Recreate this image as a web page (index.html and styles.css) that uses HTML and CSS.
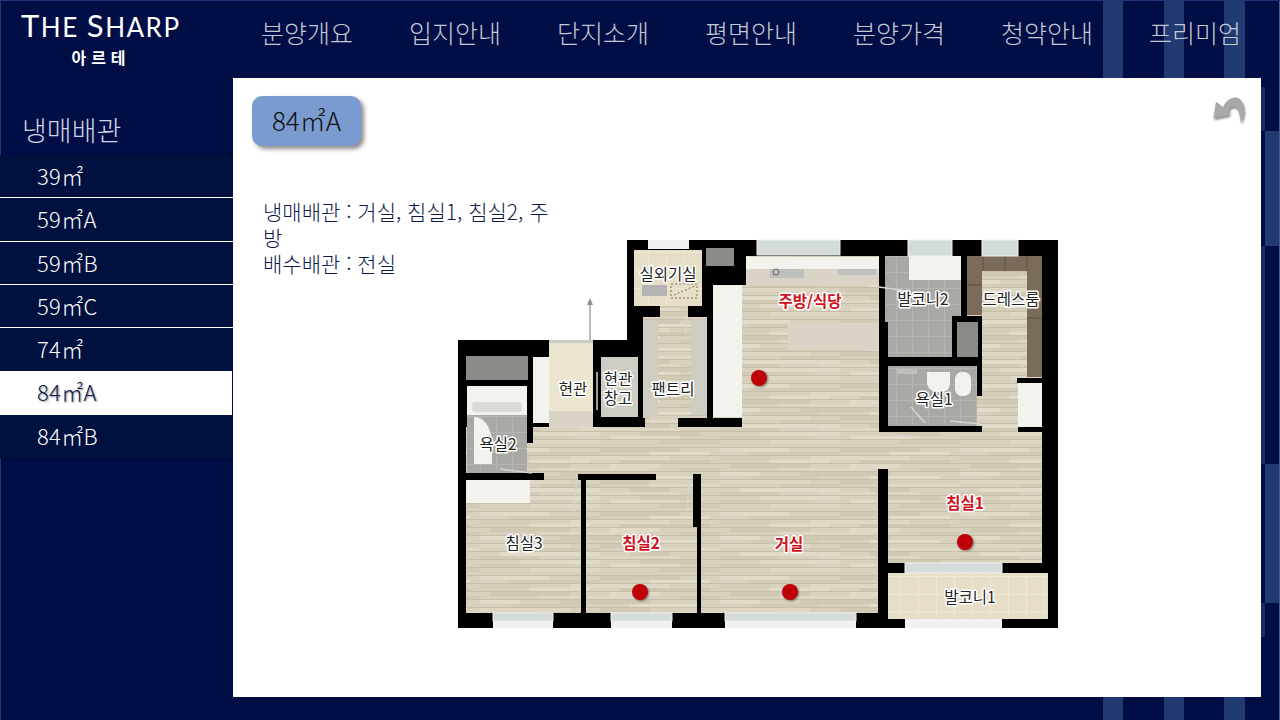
FILE: index.html
```html
<!DOCTYPE html>
<html lang="ko">
<head>
    <meta charset="UTF-8">
    <title>THE SHARP 아르테</title>
    <link rel="stylesheet" href="styles.css">
</head>
<body>
<div class="page">
    <header class="top">
        <div class="logo">
            <div class="logo-name"><span class="cap">T</span>HE <span class="cap">S</span>HARP</div>
            <div class="logo-sub">아르테</div>
        </div>
        <nav class="nav">
            <a>분양개요</a>
            <a>입지안내</a>
            <a>단지소개</a>
            <a>평면안내</a>
            <a>분양가격</a>
            <a>청약안내</a>
            <a>프리미엄</a>
        </nav>
    </header>
    <div class="main">
        <aside class="side">
            <h2>냉매배관</h2>
            <ul class="menu">
                <li>39㎡</li>
                <li>59㎡A</li>
                <li>59㎡B</li>
                <li>59㎡C</li>
                <li>74㎡</li>
                <li class="active">84㎡A</li>
                <li>84㎡B</li>
            </ul>
        </aside>
        <section class="panel">
            <div class="badge">84㎡A</div>
            <!-- back arrow -->
            <svg class="back" viewBox="0 0 38 34" width="38" height="34">
                <path d="M3.3 24.3 L6 7.7 L13 13.2 C16 5.5 24 1 29.5 5 C35 9 36 20 30.7 28.7 C30.5 21 28 13 24 12.6 C21 12.4 19 14.5 19 16 L19.5 21 Z"/>
            </svg>
            <div class="content">
                <p class="note">냉매배관 : 거실, 침실1, 침실2, 주방<br>배수배관 : 전실</p>
                <svg class="plan" viewBox="457 238 602 392" width="602" height="392">
                    <defs>
                        <pattern id="planks" width="240" height="64" patternUnits="userSpaceOnUse">
                            <rect width="240" height="64" fill="#d8d1bd"/>
                            <rect x="0" y="0" width="70" height="4" fill="#e0dac8"/>
                            <rect x="120" y="0" width="80" height="4" fill="#d0c9b4"/>
                            <rect x="30" y="4" width="90" height="4" fill="#d1cab5"/>
                            <rect x="170" y="4" width="60" height="4" fill="#e2dccb"/>
                            <rect x="0" y="8" width="50" height="4" fill="#d3ccb7"/>
                            <rect x="90" y="8" width="100" height="4" fill="#ded8c5"/>
                            <rect x="50" y="12" width="60" height="4" fill="#e1dbc9"/>
                            <rect x="140" y="12" width="90" height="4" fill="#cfc8b3"/>
                            <rect x="10" y="16" width="80" height="4" fill="#d0c9b4"/>
                            <rect x="130" y="16" width="50" height="4" fill="#e0dac7"/>
                            <rect x="60" y="20" width="110" height="4" fill="#ddd7c4"/>
                            <rect x="200" y="20" width="40" height="4" fill="#d1cab5"/>
                            <rect x="0" y="24" width="40" height="4" fill="#e1dbc9"/>
                            <rect x="80" y="24" width="90" height="4" fill="#d0c9b4"/>
                            <rect x="30" y="28" width="70" height="4" fill="#d2cbb6"/>
                            <rect x="150" y="28" width="70" height="4" fill="#e2dcca"/>
                            <rect x="0" y="32" width="90" height="4" fill="#ddd7c4"/>
                            <rect x="120" y="32" width="50" height="4" fill="#d0c9b4"/>
                            <rect x="60" y="36" width="60" height="4" fill="#d1cab5"/>
                            <rect x="170" y="36" width="70" height="4" fill="#dfd9c6"/>
                            <rect x="20" y="40" width="100" height="4" fill="#e1dbc9"/>
                            <rect x="150" y="40" width="40" height="4" fill="#d0c9b4"/>
                            <rect x="0" y="44" width="60" height="4" fill="#d1cab5"/>
                            <rect x="100" y="44" width="100" height="4" fill="#ddd7c4"/>
                            <rect x="40" y="48" width="80" height="4" fill="#e0dac8"/>
                            <rect x="160" y="48" width="60" height="4" fill="#d0c9b4"/>
                            <rect x="0" y="52" width="90" height="4" fill="#d2cbb6"/>
                            <rect x="130" y="52" width="70" height="4" fill="#e1dbc9"/>
                            <rect x="50" y="56" width="70" height="4" fill="#ddd7c4"/>
                            <rect x="180" y="56" width="60" height="4" fill="#d1cab5"/>
                            <path d="M0 7.5H240M0 15.5H240M0 23.5H240M0 31.5H240M0 39.5H240M0 47.5H240M0 55.5H240M0 63.5H240" stroke="#c6bfaa" stroke-width="1"/>
                        </pattern>
                        <pattern id="tiles" width="16" height="16" patternUnits="userSpaceOnUse">
                            <rect width="16" height="16" fill="#a9a8a4"/>
                            <path d="M0 .5H16M.5 0V16" stroke="#b6b5b1" stroke-width="1"/>
                        </pattern>
                        <pattern id="creamtiles" width="18" height="18" patternUnits="userSpaceOnUse">
                            <rect width="18" height="18" fill="#e7dec7"/>
                            <path d="M0 .5H18M.5 0V18" stroke="#efe8d6" stroke-width="1"/>
                        </pattern>
                    </defs>

                    <!-- outer walls -->
                    <polygon class="wall" points="627,240 1058,240 1058,628 458,628 458,340 627,340"/>

                    <!-- wood floors -->
                    <rect class="wood" x="466" y="427" width="576" height="186"/>
                    <rect class="wood" x="713" y="256" width="166" height="174"/>
                    <rect class="wood" x="967" y="256" width="75" height="174"/>
                    <rect class="wood" x="643" y="317" width="64" height="111"/>

                    <!-- kitchen -->
                    <rect class="wall" x="713" y="240" width="33" height="45"/>
                    <rect class="white" x="713" y="285" width="29" height="132"/>
                    <rect class="wall" x="678" y="418" width="64" height="9"/>
                    <rect class="counter" x="746" y="269" width="133" height="16"/>
                    <rect class="white" x="746" y="257" width="133" height="12"/>
                    <rect class="steel" x="770" y="269" width="34" height="9"/>
                    <circle class="hob" cx="776" cy="272" r="3"/>
                    <rect class="steel" x="838" y="269" width="38" height="6"/>
                    <rect class="counter" x="788" y="323" width="91" height="27"/>

                    <!-- balcony 2, dressing room -->
                    <rect class="wall" x="879" y="256" width="6" height="32"/>
                    <rect class="tile" x="885" y="256" width="76" height="101"/>
                    <rect class="white" x="909" y="256" width="52" height="24"/>
                    <rect class="wall" x="961" y="256" width="6" height="60"/>
                    <rect class="brown" x="967" y="256" width="75" height="15"/>
                    <rect class="brown" x="967" y="256" width="15" height="59"/>
                    <rect class="brown" x="1027" y="256" width="15" height="121"/>
                    <path class="seam" d="M983 256V271M1005 256V271M1027 256V271M967 285H982M1027 318H1042"/>
                    <rect class="wall" x="952" y="316" width="30" height="46"/>
                    <rect class="duct" x="957" y="322" width="21" height="38"/>

                    <!-- bath 1 -->
                    <rect class="wall" x="879" y="322" width="9" height="110"/>
                    <rect class="wall" x="879" y="357" width="103" height="9"/>
                    <rect class="wall" x="977" y="362" width="5" height="34"/>
                    <rect class="wall" x="879" y="426" width="103" height="6"/>
                    <rect class="tile" x="888" y="366" width="89" height="60"/>
                    <path class="white" d="M927 372H950V382C950 392 944 392 938 392C932 392 927 388 927 382Z"/>
                    <rect class="white" x="955" y="372" width="16" height="24" rx="7"/>
                    <rect class="steel" x="897" y="369" width="20" height="5"/>

                    <!-- closet next to dressing room -->
                    <rect class="wall" x="1017" y="378" width="26" height="5"/>
                    <rect class="white" x="1018" y="383" width="24" height="44"/>
                    <rect class="wall" x="1018" y="427" width="25" height="5"/>

                    <!-- bedroom 1, balcony 1 -->
                    <rect class="wall" x="878" y="469" width="10" height="159"/>
                    <rect class="wall" x="878" y="563" width="180" height="10"/>
                    <rect class="cream" x="888" y="573" width="160" height="46"/>
                    <rect class="pane" x="905" y="563" width="97" height="10"/>
                    <rect class="pane-white" x="905" y="619" width="97" height="9"/>

                    <!-- laundry, pantry -->
                    <rect class="cream" x="634" y="250" width="68" height="56"/>
                    <rect class="grey" x="642" y="285" width="25" height="11"/>
                    <rect class="dash" x="671" y="284" width="26" height="14"/>
                    <path class="dash" d="M674 295L695 286"/>
                    <rect class="wood" x="660" y="306" width="28" height="12"/>
                    <rect class="duct" x="706" y="248" width="28" height="18"/>
                    <rect class="cabinet" x="643" y="320" width="15" height="96"/>
                    <rect class="cabinet" x="691" y="319" width="16" height="96"/>
                    <rect class="wall" x="597" y="418" width="48" height="9"/>

                    <!-- entrance, storage -->
                    <rect class="cream-plain" x="549" y="343" width="44" height="68"/>
                    <rect class="counter" x="549" y="411" width="44" height="16"/>
                    <rect class="white" x="533" y="357" width="16" height="66"/>
                    <rect class="cabinet" x="601" y="357" width="37" height="60"/>
                    <rect class="sill" x="549" y="340" width="44" height="3"/>
                    <path class="door" d="M597 372V410"/>
                    <path class="arrow-line" d="M590 340V302"/>
                    <polygon class="arrow-head" points="590,298 587,305 593,305"/>

                    <!-- bath 2 -->
                    <rect class="duct" x="466" y="356" width="62" height="24"/>
                    <rect class="wall" x="527" y="380" width="6" height="63"/>
                    <rect class="tile" x="467" y="386" width="60" height="87"/>
                    <rect class="white" x="467" y="386" width="60" height="29"/>
                    <rect class="tub" x="472" y="402" width="50" height="10" rx="3"/>
                    <path class="white" d="M474 417C486 417 492 430 492 446V464H474Z"/>
                    <rect class="wall" x="458" y="473" width="86" height="7"/>
                    <rect class="white" x="466" y="480" width="64" height="23"/>

                    <!-- bedroom walls -->
                    <rect class="wall" x="578" y="474" width="78" height="6"/>
                    <rect class="wall" x="581" y="474" width="5" height="139"/>
                    <rect class="wall" x="693" y="474" width="8" height="53"/>
                    <rect class="wall" x="697" y="527" width="4" height="86"/>
                    <rect class="wall" x="856" y="613" width="22" height="15"/>

                    <!-- windows -->
                    <rect class="pane-white" x="648" y="240" width="41" height="9"/>
                    <g class="window">
                        <rect class="pane" x="757" y="240" width="83" height="15"/>
                        <rect class="pane" x="908" y="240" width="44" height="16"/>
                        <rect class="pane" x="982" y="240" width="36" height="16"/>
                        <rect class="pane" x="493" y="613" width="60" height="8"/>
                        <rect class="pane" x="611" y="613" width="61" height="8"/>
                        <rect class="pane" x="725" y="613" width="131" height="8"/>
                        <rect class="pane-white" x="493" y="621" width="60" height="7"/>
                        <rect class="pane-white" x="611" y="621" width="61" height="7"/>
                        <rect class="pane-white" x="725" y="621" width="131" height="7"/>
                    </g>

                    <!-- door leaves -->
                    <path class="door" d="M879 287L907 291M911 407L925 423M950 421L980 424M880 433L920 438M577 480L574 512M689 480L687 512M500 469L532 473M687 317L685 342"/>

                    <!-- refrigerant pipe points -->
                    <circle class="dot" cx="759" cy="378" r="8"/>
                    <circle class="dot" cx="965" cy="542" r="8"/>
                    <circle class="dot" cx="640" cy="592" r="8"/>
                    <circle class="dot" cx="790" cy="592" r="8"/>

                    <!-- room labels -->
                    <text class="lbl" x="668" y="280">실외기실</text>
                    <text class="lbl red" x="810" y="307">주방/식당</text>
                    <text class="lbl" x="923" y="305">발코니2</text>
                    <text class="lbl" x="1011" y="305">드레스룸</text>
                    <text class="lbl" x="573" y="395">현관</text>
                    <text class="lbl" x="618" y="385">현관</text>
                    <text class="lbl" x="618" y="404">창고</text>
                    <text class="lbl" x="673" y="395">팬트리</text>
                    <text class="lbl" x="934" y="405">욕실1</text>
                    <text class="lbl" x="498" y="450">욕실2</text>
                    <text class="lbl" x="524" y="549">침실3</text>
                    <text class="lbl red" x="641" y="549">침실2</text>
                    <text class="lbl red" x="789" y="550">거실</text>
                    <text class="lbl red" x="965" y="509">침실1</text>
                    <text class="lbl" x="970" y="603">발코니1</text>
                </svg>
            </div>
        </section>
    </div>
</div>
</body>
</html>
```

FILE: styles.css
```css
body {
    margin: 0;
    background: #010e46;
    font-family: "Noto Sans CJK KR", "Noto Sans", sans-serif;
    overflow: hidden;
}
.page {
    position: relative;
    width: 1280px;
    height: 720px;
    overflow: hidden;
    box-shadow: inset 1px 1px 0 #25347a, inset -1px 0 0 #4b5a9c;
    background-color: #010e46;
    background-image:
        linear-gradient(#223a72, #223a72),
        linear-gradient(#223a72, #223a72),
        linear-gradient(#223a72, #223a72),
        linear-gradient(#223a72, #223a72),
        linear-gradient(#223a72, #223a72),
        linear-gradient(#1c2c5e, #1c2c5e),
        linear-gradient(#1c2c5e, #1c2c5e),
        linear-gradient(#1c2c5e, #1c2c5e);
    background-repeat: no-repeat;
    background-size:
        20px 720px, 20px 720px, 21px 720px,
        14px 115px, 14px 139px,
        4px 44px, 4px 218px, 4px 34px;
    background-position:
        1103px 0, 1164px 0, 1224px 0,
        1265px 131px, 1265px 464px,
        1261px 87px, 1261px 246px, 1261px 603px;
}
.top {
    display: flex;
    height: 78px;
}
.logo {
    width: 233px;
    flex: none;
    padding: 9px 0 0 21px;
    box-sizing: border-box;
    color: #fff;
}
.logo-name {
    font-family: "Lato", sans-serif;
    font-size: 26px;
    line-height: 32px;
    letter-spacing: 1.5px;
    white-space: nowrap;
}
.cap {
    font-size: 31px;
}
.logo-sub {
    width: 160px;
    text-align: center;
    font-size: 16px;
    font-weight: 700;
    line-height: 20px;
    letter-spacing: 5px;
    margin-top: 4px;
}
.nav {
    display: flex;
    gap: 56px;
    margin-left: 28px;
    padding-top: 13px;
}
.nav a {
    width: 92px;
    color: #c4c8d4;
    font-size: 25px;
    font-weight: 300;
    line-height: 38px;
    white-space: nowrap;
}
.main {
    display: flex;
}
.side {
    width: 233px;
    flex: none;
}
.side h2 {
    margin: 0;
    height: 77px;
    padding: 32px 0 0 22px;
    box-sizing: border-box;
    color: #cfd5e4;
    font-size: 27px;
    font-weight: 300;
    line-height: 40px;
}
.menu {
    list-style: none;
    margin: 0;
    padding: 0;
    background: #01113f;
    box-shadow: 0 1px 3px rgba(0, 0, 0, 0.4);
}
.menu li {
    height: 43.25px;
    box-sizing: border-box;
    padding-left: 37px;
    border-bottom: 1px solid #fff;
    color: #fff;
    font-size: 22px;
    font-weight: 300;
    letter-spacing: 0.3px;
    line-height: 41px;
}
.menu li:nth-child(5),
.menu li:nth-child(6),
.menu li:nth-child(7) {
    border-bottom: none;
}
.menu li.active {
    background: #fff;
    border-right: 1px solid #01113f;
    color: #0b1a4a;
    text-shadow: 1px 1px 2px rgba(0, 0, 0, 0.45);
}
.panel {
    position: relative;
    width: 1028px;
    height: 619px;
    box-sizing: border-box;
    padding: 18px 0 0 19px;
    background: #fff;
}
.badge {
    width: 109px;
    height: 50px;
    border-radius: 10px;
    background: #7a9bd0;
    box-shadow: 3px 3px 4px rgba(0, 0, 0, 0.45);
    color: #111;
    font-size: 26px;
    font-weight: 300;
    line-height: 47px;
    text-align: center;
}
.back {
    position: absolute;
    top: 16px;
    right: 13px;
    filter: drop-shadow(1px 2px 1px rgba(0, 0, 0, 0.45));
}
.back path {
    fill: #a9a9a9;
}
.content {
    display: grid;
    margin-top: 52px;
}
.note {
    grid-area: 1 / 1;
    width: 290px;
    margin: 0 0 0 11px;
    color: #0b1a4a;
    font-size: 21px;
    font-weight: 300;
    line-height: 26px;
}
.plan {
    grid-area: 1 / 1;
    display: block;
    margin: 40px 0 0 205px;
}

/* floor plan parts */
.wall { fill: #000; }
.wood { fill: url(#planks); }
.tile { fill: url(#tiles); }
.cream { fill: url(#creamtiles); }
.cream-plain { fill: #ece6d0; }
.white { fill: #f4f2ec; }
.counter { fill: #d9d4c5; }
.cabinet { fill: #cfccc3; }
.grey { fill: #b4b4b4; }
.duct { fill: #8b8b88; }
.brown { fill: #7a6b5a; }
.seam { fill: none; stroke: #5f5344; stroke-width: 1; }
.steel { fill: #bfc0bd; }
.hob { fill: none; stroke: #666; stroke-width: 1; }
.tub { fill: #dcdad5; }
.sill { fill: #c9c9c5; }
.pane { fill: #d3dcd8; stroke: #f0f1ef; stroke-width: 1; }
.pane-white { fill: #f1f2f0; }
.dash { fill: none; stroke: #7a715c; stroke-width: 1; stroke-dasharray: 2 2; }
.door { fill: none; stroke: #d6d4cc; stroke-width: 1.5; }
.arrow-line { fill: none; stroke: #a3a3a3; stroke-width: 1.5; }
.arrow-head { fill: #8f8f8f; }
.dot {
    fill: #c00008;
    filter: drop-shadow(1px 1px 1px rgba(0, 0, 0, 0.45));
}
.lbl {
    fill: #222;
    stroke: #fff;
    stroke-width: 3px;
    stroke-linejoin: round;
    paint-order: stroke;
    font-size: 15.5px;
    text-anchor: middle;
}
.lbl.red {
    fill: #d0101c;
    font-weight: 700;
}
```
